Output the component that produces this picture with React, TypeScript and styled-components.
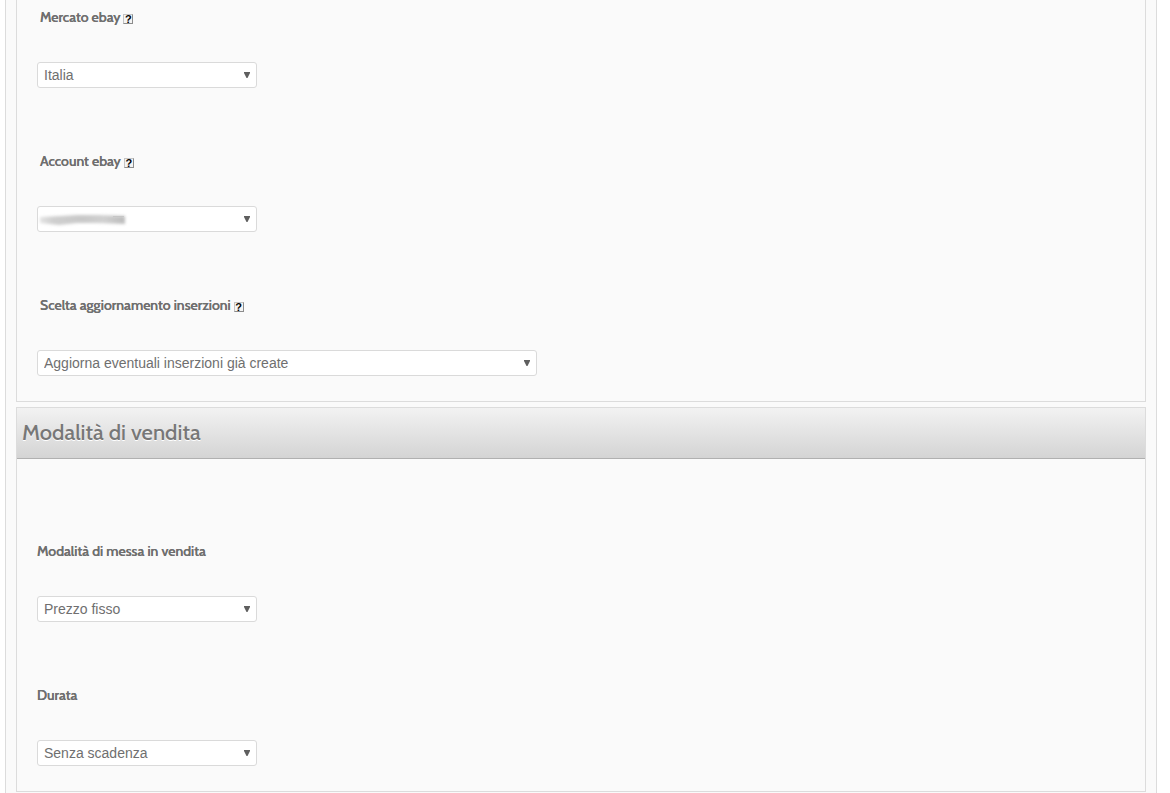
import React, { useId } from "react";
import styled, { createGlobalStyle } from "styled-components";

const GlobalStyle = createGlobalStyle`
  *, *::before, *::after { box-sizing: border-box; }
  body {
    margin: 0;
    background: #fff;
    color: #6f6f6f;
    font-family: Cabin, Lato, "Liberation Sans", sans-serif;
  }
`;

const Page = styled.main`
  display: flex;
  flex-direction: column;
  gap: 5px;
  min-height: 100vh;
  margin: 0 13px 0 5px;
  padding: 0 10px;
  background: #fafafa;
  border: solid #dcdcdc;
  border-width: 0 1px;
`;

const Section = styled.section<{ $continued?: boolean }>`
  background: #fafafa;
  border: 1px solid #dcdcdc;
  border-top-width: ${(p) => (p.$continued ? "0" : "1px")};
`;

const SectionTitle = styled.h2`
  margin: 0;
  padding: 0 5px;
  height: 51px;
  line-height: 50px;
  font-size: 22px;
  font-weight: 500;
  color: #777;
  text-shadow: 0 1px 0 #fff;
  background: linear-gradient(#f2f2f2, #d4d4d4);
  border-bottom: 1px solid #b0b0b0;
`;

const Fields = styled.div<{ $top: number }>`
  display: flex;
  flex-direction: column;
  gap: 64px;
  padding: ${(p) => p.$top}px 20px 25px;
`;

const Field = styled.div`
  display: flex;
  flex-direction: column;
  gap: 35px;
`;

const LabelRow = styled.div<{ $indent: boolean }>`
  display: flex;
  align-items: center;
  gap: 3px;
  height: 19px;
  padding-left: ${(p) => (p.$indent ? "3px" : "0")};
`;

const Label = styled.label`
  font-size: 14px;
  line-height: 19px;
  font-weight: 500;
  text-shadow: 0 0 0 currentColor;
`;

const Help = styled.button`
  display: flex;
  align-items: center;
  justify-content: center;
  width: 10px;
  height: 10px;
  margin-top: 3px;
  padding: 0;
  border: 1px solid #c4c4c4;
  border-right-color: #8c8c8c;
  border-bottom-color: #8c8c8c;
  background: #f4f4f4;
  color: #000;
  font: 700 11px/8px "Liberation Sans", Arial, sans-serif;
  cursor: help;
`;

const SelectBox = styled.div<{ $wide?: boolean }>`
  position: relative;
  width: ${(p) => (p.$wide ? "500px" : "220px")};
  max-width: 100%;
`;

const Select = styled.select`
  display: block;
  width: 100%;
  height: 26px;
  padding: 0 20px 0 6px;
  appearance: none;
  background: #fff;
  border: 1px solid #dadada;
  border-radius: 3px;
  color: #6f6f6f;
  font: 14px/24px "Liberation Sans", Arial, sans-serif;
`;

const Arrow = styled.svg`
  position: absolute;
  top: 10px;
  right: 7px;
  width: 6px;
  height: 6px;
  fill: #5f5f5f;
  pointer-events: none;
`;

const Redaction = styled.svg`
  position: absolute;
  top: 4px;
  left: 0;
  width: 92px;
  height: 18px;
  pointer-events: none;
`;

type SelectFieldProps = {
  label: string;
  value?: string;
  help?: boolean;
  wide?: boolean;
};

function SelectField({ label, value, help = false, wide }: SelectFieldProps) {
  const id = useId();
  return (
    <Field>
      <LabelRow $indent={help}>
        <Label htmlFor={id}>{label}</Label>
        {help && <Help type="button" aria-label={`Aiuto: ${label}`}>?</Help>}
      </LabelRow>
      <SelectBox $wide={wide}>
        <Select id={id}>
          <option>{value}</option>
        </Select>
        {!value && (
          <Redaction viewBox="0 0 92 18" aria-hidden="true">
            <defs>
              <filter id="smudge" x="-10%" y="-50%" width="120%" height="200%">
                <feGaussianBlur stdDeviation="1.6 1.4" />
              </filter>
              <linearGradient id="smudgeTone">
                <stop offset="0" stopColor="#e4e4e4" />
                <stop offset="0.15" stopColor="#cfcfcf" />
                <stop offset="0.5" stopColor="#c8c8c8" />
                <stop offset="0.75" stopColor="#d0d0d0" />
                <stop offset="1" stopColor="#bcbcbc" />
              </linearGradient>
            </defs>
            <g filter="url(#smudge)">
              <path
                d="M3 7 L24 6 L40 5 L62 5 L88 6 L88 14 L60 13 L40 13 L22 15 L3 13Z"
                fill="url(#smudgeTone)"
              />
            </g>
            <path d="M76 6.5 H87" stroke="#c0c0c0" strokeWidth="1" opacity="0.7" />
          </Redaction>
        )}
        <Arrow viewBox="0 0 6 6" aria-hidden="true">
          <path d="M0 0H6V1L3.5 6H2.5L0 1Z" />
        </Arrow>
      </SelectBox>
    </Field>
  );
}

export default function App() {
  return (
    <>
      <GlobalStyle />
      <Page>
        <Section $continued>
          <Fields $top={8}>
            <SelectField label="Mercato ebay" value="Italia" help />
            <SelectField label="Account ebay" help />
            <SelectField
              label="Scelta aggiornamento inserzioni"
              value="Aggiorna eventuali inserzioni già create"
              help
              wide
            />
          </Fields>
        </Section>
        <Section>
          <SectionTitle>Modalità di vendita</SectionTitle>
          <Fields $top={83}>
            <SelectField label="Modalità di messa in vendita" value="Prezzo fisso" />
            <SelectField label="Durata" value="Senza scadenza" />
          </Fields>
        </Section>
      </Page>
    </>
  );
}
